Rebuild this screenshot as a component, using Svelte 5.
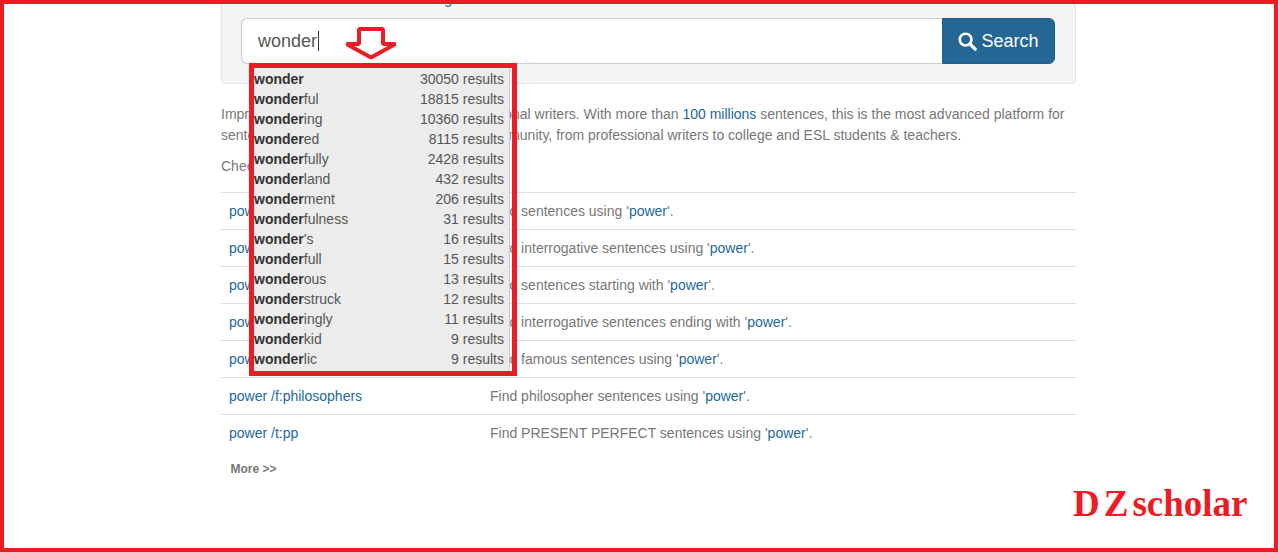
<script>
    const suggestions = [
        { rest: "", count: 30050 },
        { rest: "ful", count: 18815 },
        { rest: "ing", count: 10360 },
        { rest: "ed", count: 8115 },
        { rest: "fully", count: 2428 },
        { rest: "land", count: 432 },
        { rest: "ment", count: 206 },
        { rest: "fulness", count: 31 },
        { rest: "'s", count: 16 },
        { rest: "full", count: 15 },
        { rest: "ous", count: 13 },
        { rest: "struck", count: 12 },
        { rest: "ingly", count: 11 },
        { rest: "kid", count: 9 },
        { rest: "lic", count: 9 }
    ];

    const rows = [
        { cmd: "power /s", text: "Find sentences using" },
        { cmd: "power /q", text: "Find interrogative sentences using" },
        { cmd: "power /b", text: "Find sentences starting with" },
        { cmd: "power /e", text: "Find interrogative sentences ending with" },
        { cmd: "power /f", text: "Find famous sentences using" },
        { cmd: "power /f:philosophers", text: "Find philosopher sentences using" },
        { cmd: "power /t:pp", text: "Find PRESENT PERFECT sentences using" }
    ];
</script>

<div class="page">
    <main class="wrap">
        <section class="well">
            <div class="hint"><a href="#top">Read about sentence filtering</a></div>
            <form class="search" onsubmit={(e) => e.preventDefault()}>
                <div class="input">wonder<span class="caret"></span></div>
                <button type="submit">
                    <svg width="19" height="19" viewBox="0 0 19 19" aria-hidden="true">
                        <circle cx="7.6" cy="7.6" r="5.9" fill="none" stroke="#fff" stroke-width="2.6" />
                        <path d="M12 12l5.2 5.2" stroke="#fff" stroke-width="3.2" stroke-linecap="round" />
                    </svg>
                    Search
                </button>
            </form>

            <ul class="menu">
                {#each suggestions as item}
                    <li>
                        <span><b>wonder</b>{item.rest}</span>
                        <span>{item.count} results</span>
                    </li>
                {/each}
            </ul>
        </section>

        <p class="intro">
            Improve your writing by learning from professional writers. With more than <a href="#top">100 millions</a> sentences, this is the most advanced platform for<br />
            sentence search trusted by a great global community, from professional writers to college and ESL students &amp; teachers.
        </p>
        <p class="check">Check these examples:</p>

        <div class="table">
            {#each rows as row}
                <div class="row">
                    <a href="#top">{row.cmd}</a>
                    <span>{row.text} '<a href="#top">power</a>'.</span>
                </div>
            {/each}
        </div>

        <div class="more">More &gt;&gt;</div>
    </main>

    <!-- annotations painted over the screenshot -->
    <div class="frame"></div>
    <div class="redbox"></div>
    <svg class="arrow" width="56" height="36" viewBox="0 0 56 36" aria-hidden="true">
        <path d="M15 3H39V18H51.5L27 31.5L2.500 18H15Z" fill="#fff" stroke="#ed1c24" stroke-width="4" stroke-linejoin="bevel" />
    </svg>
    <div class="brand"><span class="dz">DZ</span>scholar</div>
</div>

<style>
    :global(body) {
        margin: 0;
        background: #fff;
    }

    .page {
        position: relative;
        height: 552px;
        overflow: hidden;
        font-family: "Liberation Sans", Arial, sans-serif;
        font-size: 14px;
        line-height: 20px;
        color: #777;
    }

    a {
        color: #23689b;
        text-decoration: none;
    }

    .wrap {
        width: 855px;
        margin-left: 221px;
    }

    .well {
        position: relative;
        box-sizing: border-box;
        height: 104px;
        margin-top: -20px;
        padding: 17px 19px 0;
        background: #f5f5f5;
        border: 1px solid #e3e3e3;
        border-radius: 4px;
    }

    .hint {
        height: 20px;
        line-height: 2px;
        padding-left: 29px;
    }

    .search {
        display: flex;
        height: 46px;
        width: 814px;
    }

    .input {
        flex: 1;
        box-sizing: border-box;
        display: flex;
        align-items: center;
        padding-left: 16px;
        background: #fff;
        border: 1px solid #ccc;
        border-right: 0;
        border-radius: 6px 0 0 6px;
        font-size: 18px;
        color: #555;
    }

    .caret {
        width: 1px;
        height: 20px;
        margin-left: 1px;
        background: #333;
    }

    button {
        display: flex;
        align-items: center;
        justify-content: center;
        gap: 4px;
        width: 113px;
        padding: 0;
        background: #246794;
        border: 1px solid #1f5f8b;
        border-radius: 0 6px 6px 0;
        color: #fff;
        font: 18px "Liberation Sans", Arial, sans-serif;
    }

    .menu {
        position: absolute;
        left: 32px;
        top: 83px;
        z-index: 1;
        box-sizing: border-box;
        width: 256px;
        margin: 0;
        padding: 5px 5px 5px 0;
        list-style: none;
        background: #ececec;
        border-right: 1px solid #c8c8c8;
        color: #555;
    }

    .menu li {
        display: flex;
        justify-content: space-between;
        height: 20px;
    }

    .menu b {
        color: #333;
    }

    .intro {
        margin: 20px 0 0;
        line-height: 21px;
        white-space: nowrap;
    }

    .check {
        margin: 10px 0 15px;
        line-height: 21px;
    }

    .row {
        display: grid;
        grid-template-columns: 261px 1fr;
        height: 37px;
        box-sizing: border-box;
        padding: 8px;
        border-top: 1px solid #ddd;
    }

    .more {
        margin: 8px 0 0 9.5px;
        font-size: 12px;
        font-weight: bold;
    }

    .frame {
        position: absolute;
        inset: 0;
        border: 4px solid #ed1c24;
        pointer-events: none;
    }

    .redbox {
        position: absolute;
        left: 249px;
        top: 63px;
        width: 268px;
        height: 313px;
        box-sizing: border-box;
        border: 5px solid #ed1c24;
        z-index: 2;
    }

    .arrow {
        position: absolute;
        left: 344px;
        top: 26px;
        z-index: 2;
    }

    .brand {
        position: absolute;
        left: 1073px;
        top: 484px;
        font-family: "Liberation Serif", serif;
        font-size: 37px;
        line-height: 40px;
        font-weight: bold;
        color: #ed1c24;
    }

    .dz {
        letter-spacing: 4px;
    }
</style>
